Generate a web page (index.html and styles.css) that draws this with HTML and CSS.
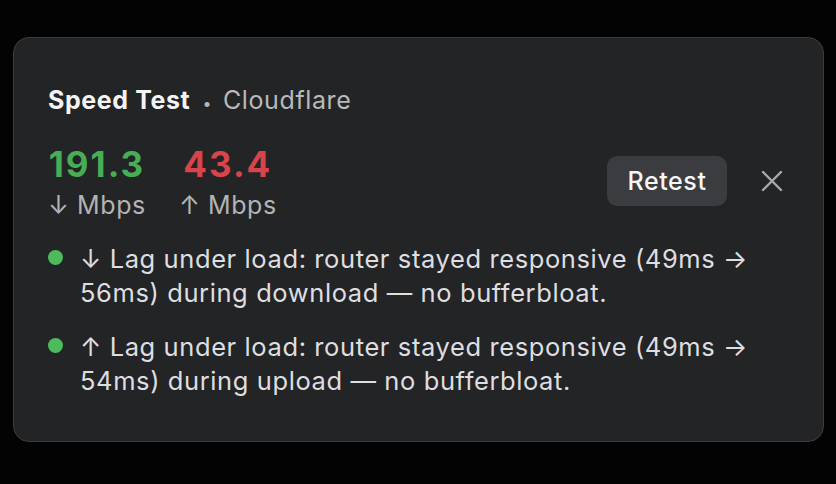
FILE: index.html
```html
<!DOCTYPE html>
<html>
<head>
<meta charset="utf-8">
<link rel="stylesheet" href="styles.css">
</head>
<body>
<div class="card">
  <div class="title"><span class="name">Speed Test</span><span class="sep">•</span><span class="provider">Cloudflare</span></div>
  <div class="main">
    <div class="stats">
      <div class="stat">
        <div class="num down">191.3</div>
        <div class="unit">↓ Mbps</div>
      </div>
      <div class="stat">
        <div class="num up">43.4</div>
        <div class="unit">↑ Mbps</div>
      </div>
    </div>
    <div class="actions">
      <button class="retest">Retest</button>
      <button class="close" aria-label="Close">
        <svg width="22" height="22" viewBox="0 0 22 22"><path d="M2 2 L20 20 M20 2 L2 20" stroke="#a9a9ab" stroke-width="2.4" stroke-linecap="round"/></svg>
      </button>
    </div>
  </div>
  <ul class="results">
    <li><span class="dot"></span><span class="txt">↓ Lag under load: router stayed responsive (49ms → 56ms) during download — no bufferbloat.</span></li>
    <li><span class="dot"></span><span class="txt">↑ Lag under load: router stayed responsive (49ms → 54ms) during upload — no bufferbloat.</span></li>
  </ul>
</div>
</body>
</html>
```
FILE: styles.css
```css
html, body {
  margin: 0;
  padding: 0;
  background: #030303;
  font-family: Inter, "Open Sans", "Liberation Sans", sans-serif;
}
.card {
  box-sizing: border-box;
  margin: 37px 12px 0 13px;
  height: 405px;
  background: #232426;
  border: 1.5px solid #3b3c3e;
  border-radius: 16px;
  padding: 47px 40px 0 34px;
  color: #e4e4e6;
}
.title {
  display: flex;
  align-items: baseline;
  font-size: 25px;
  line-height: 30px;
  letter-spacing: 0.6px;
}
.name {
  font-weight: 700;
  color: #f4f4f5;
}
.sep {
  color: #b5b5b7;
  margin: 0 11px 0 12px;
  font-size: 16px;
}
.provider {
  color: #b9b9bb;
  font-weight: 400;
}
.main {
  display: flex;
  align-items: center;
  justify-content: space-between;
  margin-top: 26px;
}
.stats {
  display: flex;
  gap: 33px;
}
.stat {
  text-align: center;
}
.num {
  font-size: 35px;
  font-weight: 700;
  line-height: 40px;
  letter-spacing: 2px;
}
.down { color: #47ae55; }
.up { color: #d9434a; }
.unit {
  font-size: 25px;
  line-height: 30px;
  letter-spacing: 0.6px;
  margin-top: 6px;
  color: #b3b3b5;
}
.actions {
  display: flex;
  align-items: center;
  gap: 34px;
  margin-top: -2px;
}
.retest {
  font-family: inherit;
  font-size: 25px;
  letter-spacing: 0.6px;
  font-weight: 500;
  color: #f6f6f7;
  background: #3b3c3f;
  border: none;
  border-radius: 10px;
  width: 120px;
  height: 50px;
  padding: 0;
}
.close {
  background: none;
  border: none;
  padding: 0;
  width: 22px;
  height: 22px;
  display: flex;
}
.results {
  list-style: none;
  margin: 22px 0 0 0;
  padding: 0;
}
.results li {
  display: flex;
  align-items: flex-start;
  font-size: 25.5px;
  line-height: 34px;
  letter-spacing: 0.6px;
  color: #dedee0;
  margin-bottom: 20px;
}
.dot {
  flex: none;
  width: 15px;
  height: 15px;
  border-radius: 50%;
  background: #4dbb5c;
  margin: 8px 17px 0 0;
}
.txt {
  max-width: 690px;
}
```
